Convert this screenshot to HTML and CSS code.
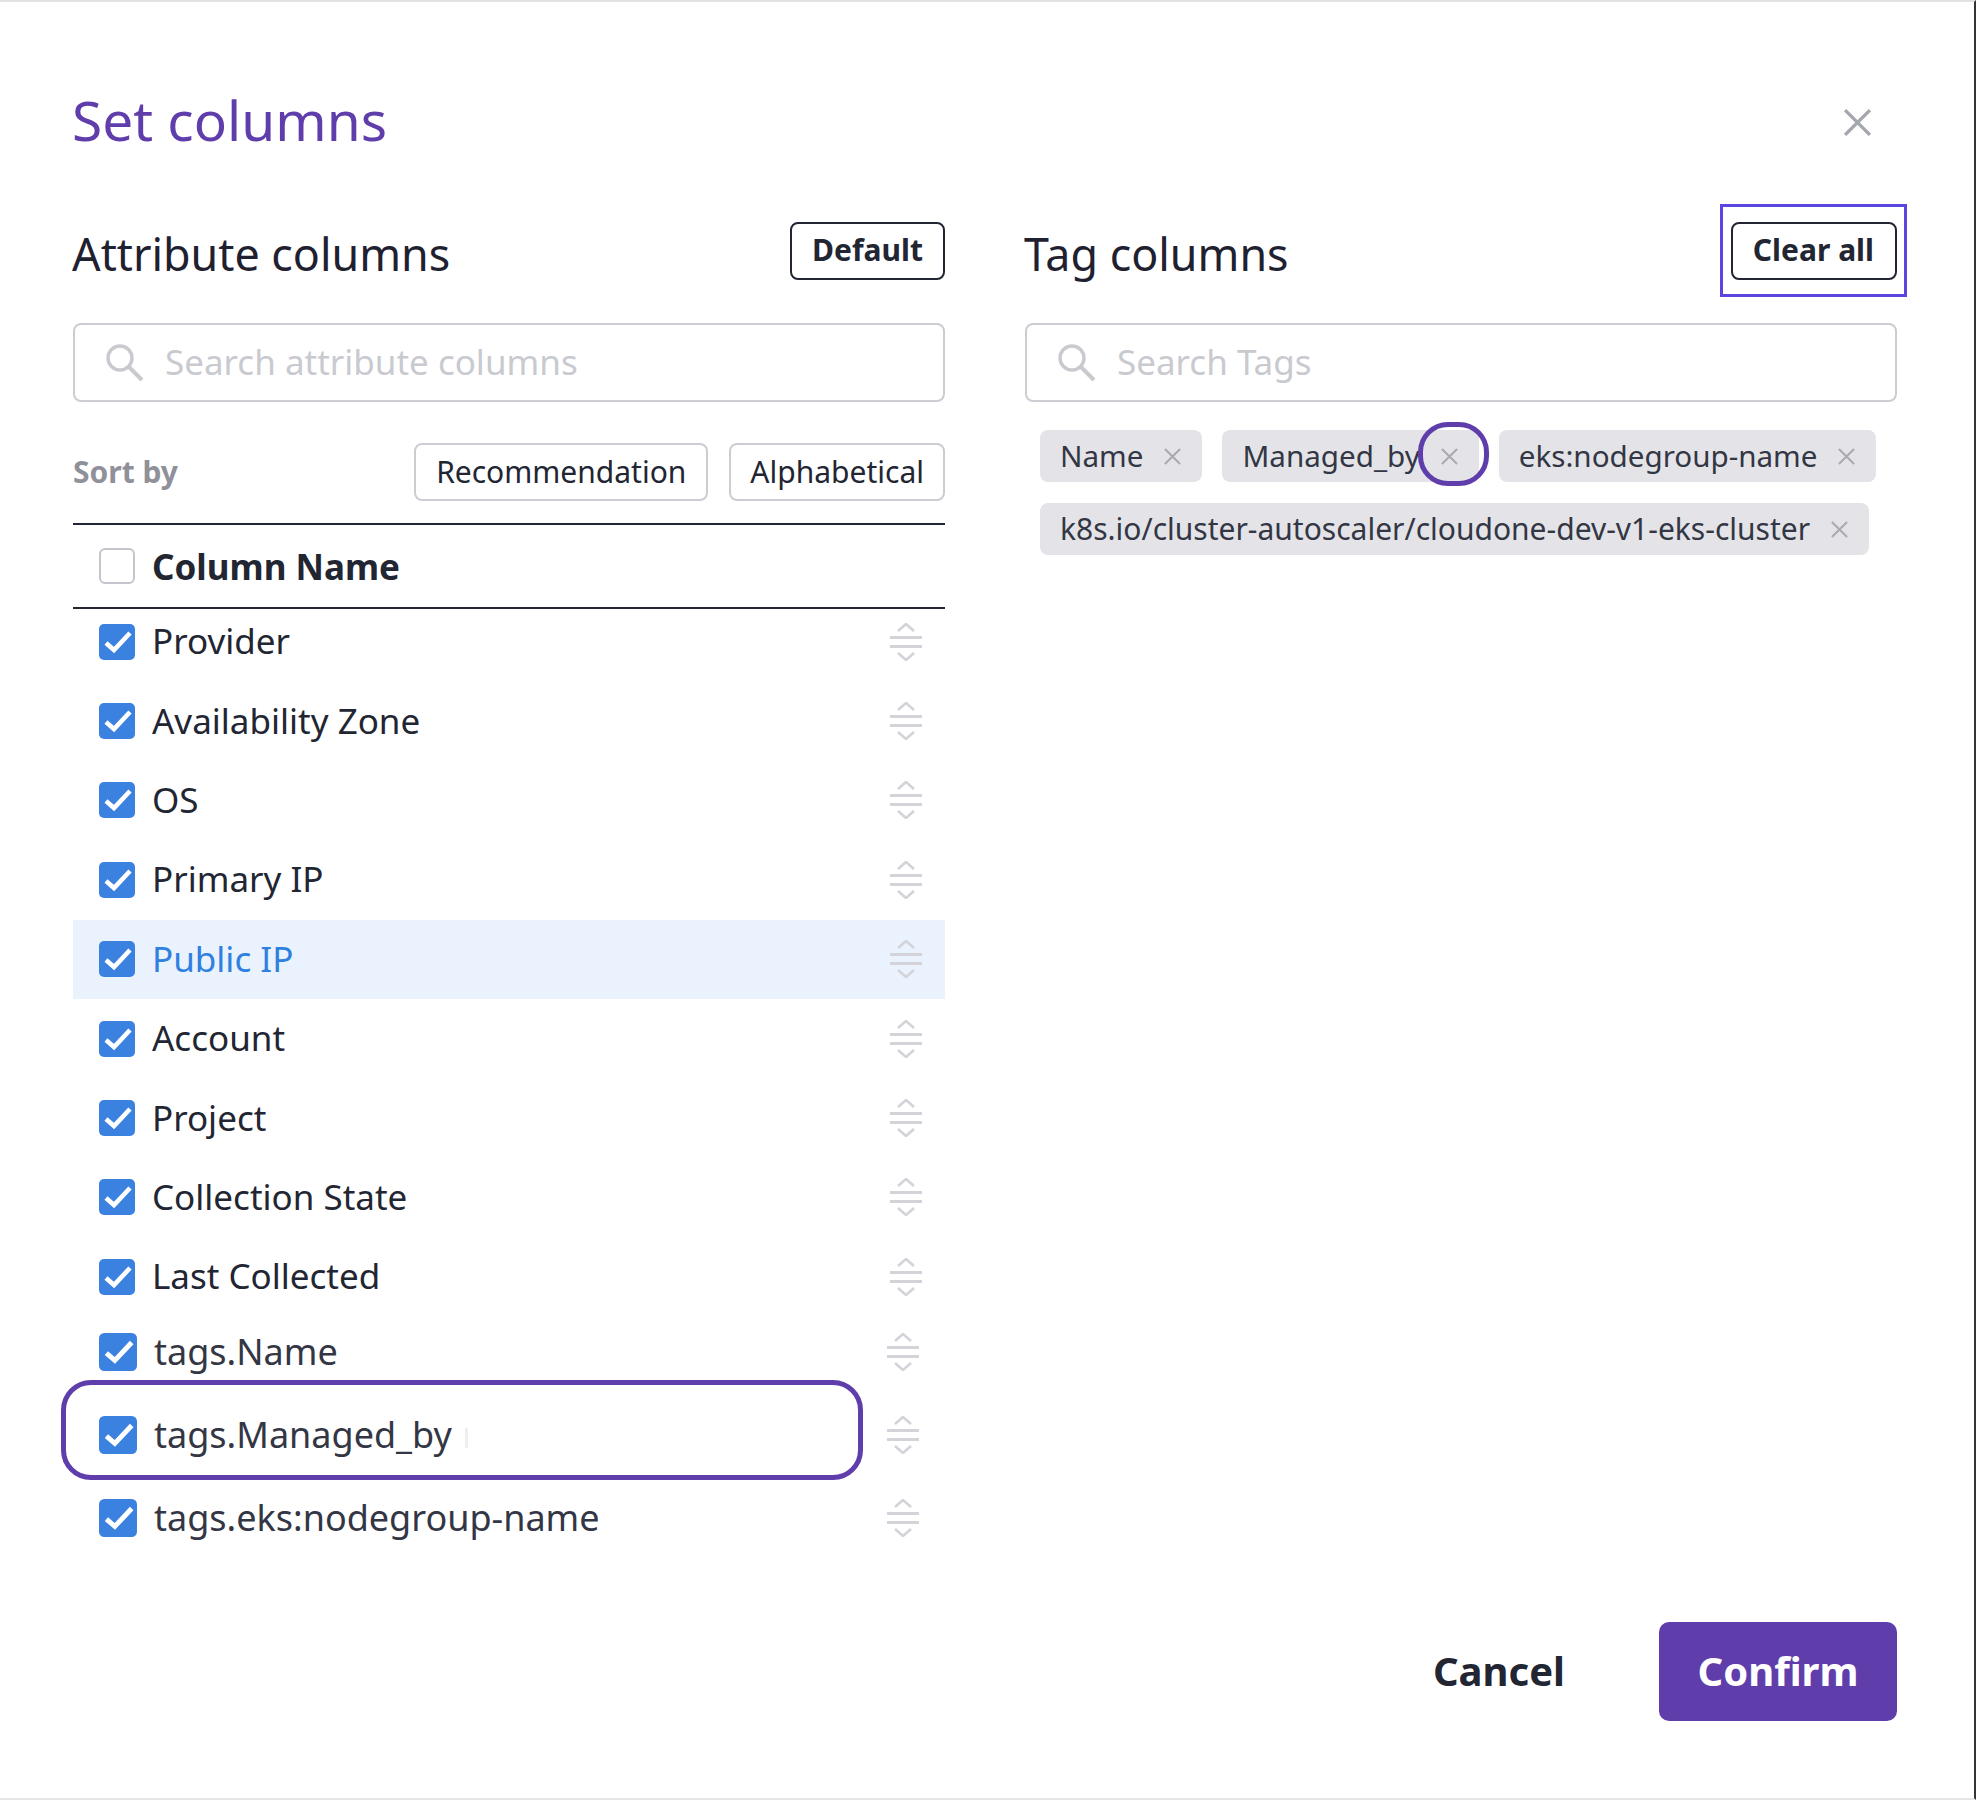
FILE: index.html
```html
<!DOCTYPE html>
<html lang="en">
<head>
    <meta charset="UTF-8">
    <title>Set columns</title>
    <link rel="stylesheet" href="styles.css">
</head>
<body>
    <svg class="defs" width="0" height="0">
        <symbol id="i-check" viewBox="0 0 36 36">
            <rect x="0" y="0" width="36" height="36" rx="5" fill="#3b82e0"/>
            <path d="M7 19l8 7L31 9" fill="none" stroke="#fff" stroke-width="4.600"/>
        </symbol>
        <symbol id="i-sort" viewBox="0 0 32 38">
            <path d="M8 8l8-7 8 7M8 30l8 7 8-7" fill="none" stroke="#d3d3d9" stroke-width="2.600"/>
            <path d="M0 14.500h32M0 23.500h32" fill="none" stroke="#d3d3d9" stroke-width="2.800"/>
        </symbol>
        <symbol id="i-search" viewBox="0 0 40 38">
            <circle cx="15" cy="14" r="12" fill="none" stroke="#c9c9cf" stroke-width="3.400"/>
            <path d="M24 23l13 13" fill="none" stroke="#c9c9cf" stroke-width="4"/>
        </symbol>
        <symbol id="i-x" viewBox="0 0 20 20">
            <path d="M2 2l16 16M18 2L2 18" fill="none" stroke="currentColor" stroke-width="2.200"/>
        </symbol>
    </svg>

    <div class="modal">
        <header class="modal-head">
            <h1>Set columns</h1>
            <svg class="close"><use href="#i-x"/></svg>
        </header>

        <div class="columns">
            <section class="col">
                <div class="col-head">
                    <h2>Attribute columns</h2>
                    <button class="btn">Default</button>
                </div>
                <div class="search">
                    <svg class="search-icon"><use href="#i-search"/></svg>
                    <span>Search attribute columns</span>
                </div>
                <div class="sort">
                    <span class="sort-label">Sort by</span>
                    <button class="sort-btn">Recommendation</button>
                    <button class="sort-btn">Alphabetical</button>
                </div>
                <div class="table-head">
                    <span class="box"></span>
                    <span>Column Name</span>
                </div>
                <div class="rows">
                    <div class="row"><svg class="check"><use href="#i-check"/></svg><span>Provider</span><svg class="grip"><use href="#i-sort"/></svg></div>
                    <div class="row"><svg class="check"><use href="#i-check"/></svg><span>Availability Zone</span><svg class="grip"><use href="#i-sort"/></svg></div>
                    <div class="row"><svg class="check"><use href="#i-check"/></svg><span>OS</span><svg class="grip"><use href="#i-sort"/></svg></div>
                    <div class="row"><svg class="check"><use href="#i-check"/></svg><span>Primary IP</span><svg class="grip"><use href="#i-sort"/></svg></div>
                    <div class="row active"><svg class="check"><use href="#i-check"/></svg><span>Public IP</span><svg class="grip"><use href="#i-sort"/></svg></div>
                    <div class="row"><svg class="check"><use href="#i-check"/></svg><span>Account</span><svg class="grip"><use href="#i-sort"/></svg></div>
                    <div class="row"><svg class="check"><use href="#i-check"/></svg><span>Project</span><svg class="grip"><use href="#i-sort"/></svg></div>
                    <div class="row"><svg class="check"><use href="#i-check"/></svg><span>Collection State</span><svg class="grip"><use href="#i-sort"/></svg></div>
                    <div class="row"><svg class="check"><use href="#i-check"/></svg><span>Last Collected</span><svg class="grip"><use href="#i-sort"/></svg></div>
                </div>
                <div class="rows tag-rows">
                    <div class="row"><svg class="check"><use href="#i-check"/></svg><span>tags.Name</span><svg class="grip"><use href="#i-sort"/></svg></div>
                    <div class="row"><i class="ring-row"></i><svg class="check"><use href="#i-check"/></svg><span>tags.Managed_by<i class="caret"></i></span><svg class="grip"><use href="#i-sort"/></svg></div>
                    <div class="row"><svg class="check"><use href="#i-check"/></svg><span>tags.eks:nodegroup-name</span><svg class="grip"><use href="#i-sort"/></svg></div>
                </div>
            </section>

            <section class="col">
                <div class="col-head">
                    <h2>Tag columns</h2>
                    <button class="btn clear">Clear all</button>
                </div>
                <div class="search">
                    <svg class="search-icon"><use href="#i-search"/></svg>
                    <span>Search Tags</span>
                </div>
                <div class="chips">
                    <span class="chip">Name<svg class="chip-x"><use href="#i-x"/></svg></span>
                    <span class="chip">Managed_by<i class="ring-x"></i><svg class="chip-x"><use href="#i-x"/></svg></span>
                    <span class="chip">eks:nodegroup-name<svg class="chip-x"><use href="#i-x"/></svg></span>
                    <span class="chip long">k8s.io/cluster-autoscaler/cloudone-dev-v1-eks-cluster<svg class="chip-x"><use href="#i-x"/></svg></span>
                </div>
            </section>
        </div>

        <footer class="modal-foot">
            <button class="cancel">Cancel</button>
            <button class="confirm">Confirm</button>
        </footer>
    </div>
</body>
</html>
```

FILE: styles.css
```css
* {
    box-sizing: border-box;
}
body {
    margin: 0;
    background: #fff;
    font-family: "Noto Sans", sans-serif;
    color: #222532;
}
button {
    font-family: inherit;
    background: none;
    cursor: pointer;
}
.defs {
    position: absolute;
}
.modal {
    width: 1976px;
    height: 1800px;
    padding: 0 72px 0 73px;
    border-top: 2px solid #e2e2e2;
    border-right: 2px solid #333;
    border-bottom: 2px solid #e6e6e6;
    display: flex;
    flex-direction: column;
}
.modal-head {
    height: 204px;
    padding-top: 78px;
    display: flex;
    justify-content: space-between;
    align-items: flex-start;
}
h1 {
    margin: 0 0 0 -1px;
    font-size: 55px;
    line-height: 80px;
    font-weight: 400;
    color: #5f3dab;
}
.close {
    width: 31px;
    height: 31px;
    margin: 27px 29px 0 0;
    color: #a5a7ae;
}
.columns {
    display: grid;
    grid-template-columns: 872px 872px;
    gap: 80px;
}
.col-head {
    height: 117px;
    padding-top: 16px;
    display: flex;
    justify-content: space-between;
    align-items: flex-start;
}
h2 {
    margin: 1px 0 0 -1px;
    font-size: 44.800px;
    line-height: 62px;
    font-weight: 400;
    color: #1f2130;
}
.btn {
    height: 58px;
    padding: 0 20px 4px;
    border: 2px solid #222532;
    border-radius: 8px;
    font-size: 30px;
    font-weight: 700;
    color: #222532;
}
.clear {
    position: relative;
    padding-right: 21px;
}
.clear::after {
    content: "";
    position: absolute;
    left: -13px;
    right: -12px;
    top: -20px;
    bottom: -19px;
    border: 3px solid #5b45e0;
}
.search {
    height: 79px;
    padding: 0 30px;
    border: 2px solid #ccccd3;
    border-radius: 8px;
    display: flex;
    align-items: center;
    gap: 20px;
    font-size: 35px;
    color: #c9cad0;
}
.search-icon {
    width: 40px;
    height: 38px;
}
.search span {
    padding-bottom: 2px;
}
.sort {
    height: 121px;
    padding: 41px 0 22px;
    display: flex;
    align-items: center;
    gap: 21px;
}
.sort-label {
    margin-right: auto;
    padding-bottom: 2px;
    font-size: 30px;
    font-weight: 700;
    color: #8f9099;
}
.sort-btn {
    height: 58px;
    padding: 0 20px 2px;
    border: 2px solid #ccccd3;
    border-radius: 8px;
    font-size: 30px;
    color: #222532;
}
.sort-btn + .sort-btn {
    padding: 0 19px 2px;
}
.table-head {
    height: 86px;
    padding-left: 26px;
    border-top: 2px solid #222532;
    border-bottom: 2px solid #222532;
    display: flex;
    align-items: center;
    gap: 17px;
    font-size: 35px;
    font-weight: 700;
}
.box {
    width: 36px;
    height: 36px;
    border: 2px solid #c4c5cc;
    border-radius: 6px;
}
.rows {
    margin-top: -7px;
}
.row {
    position: relative;
    height: 79.400px;
    padding: 0 23px 0 26px;
    display: flex;
    align-items: center;
    gap: 17px;
    font-size: 35px;
}
.row span {
    flex: 1;
    padding-bottom: 2px;
}
.active {
    background: #eaf2fd;
    color: #2f80e0;
}
.check {
    width: 36px;
    height: 36px;
}
.grip {
    width: 32px;
    height: 38px;
}
.tag-rows {
    margin-top: -6px;
}
.tag-rows .row {
    height: 83.200px;
    padding-right: 26px;
    padding-left: 26px;
    gap: 17px;
    font-size: 36px;
    color: #333644;
}
.tag-rows .check {
    width: 38px;
    height: 38px;
}
.caret {
    display: inline-block;
    width: 3px;
    height: 20px;
    margin-left: 13px;
    background: #eeeef0;
}
.ring-row {
    position: absolute;
    left: -12px;
    top: -14px;
    width: 802px;
    height: 100px;
    border: 5px solid #5f3dab;
    border-radius: 30px;
}
.chips {
    margin-top: 28px;
    padding-left: 15px;
    display: flex;
    flex-wrap: wrap;
    gap: 21px 20px;
}
.chip {
    position: relative;
    height: 52px;
    padding: 0 20px 2px 20px;
    border-radius: 8px;
    background: #e4e4e8;
    display: flex;
    align-items: center;
    gap: 20px;
    font-size: 29.600px;
    color: #333644;
    white-space: nowrap;
}
.long {
    font-size: 30px;
}
.chip-x {
    width: 19px;
    height: 19px;
    margin-top: 2px;
    color: #a9aab2;
}
.ring-x {
    position: absolute;
    right: -10px;
    top: -8px;
    width: 71px;
    height: 64px;
    border: 5px solid #5f3dab;
    border-radius: 30px;
}
.modal-foot {
    margin-top: auto;
    margin-bottom: 77px;
    display: flex;
    justify-content: flex-end;
    align-items: center;
    gap: 94px;
    padding-right: 5px;
}
.cancel {
    border: 0;
    padding: 0 0 2px;
    font-size: 40px;
    font-weight: 700;
    color: #222532;
}
.confirm {
    width: 238px;
    height: 99px;
    padding: 0 0 2px;
    border: 0;
    border-radius: 10px;
    background: #5f3dab;
    color: #fff;
    font-size: 40px;
    font-weight: 700;
}
```
